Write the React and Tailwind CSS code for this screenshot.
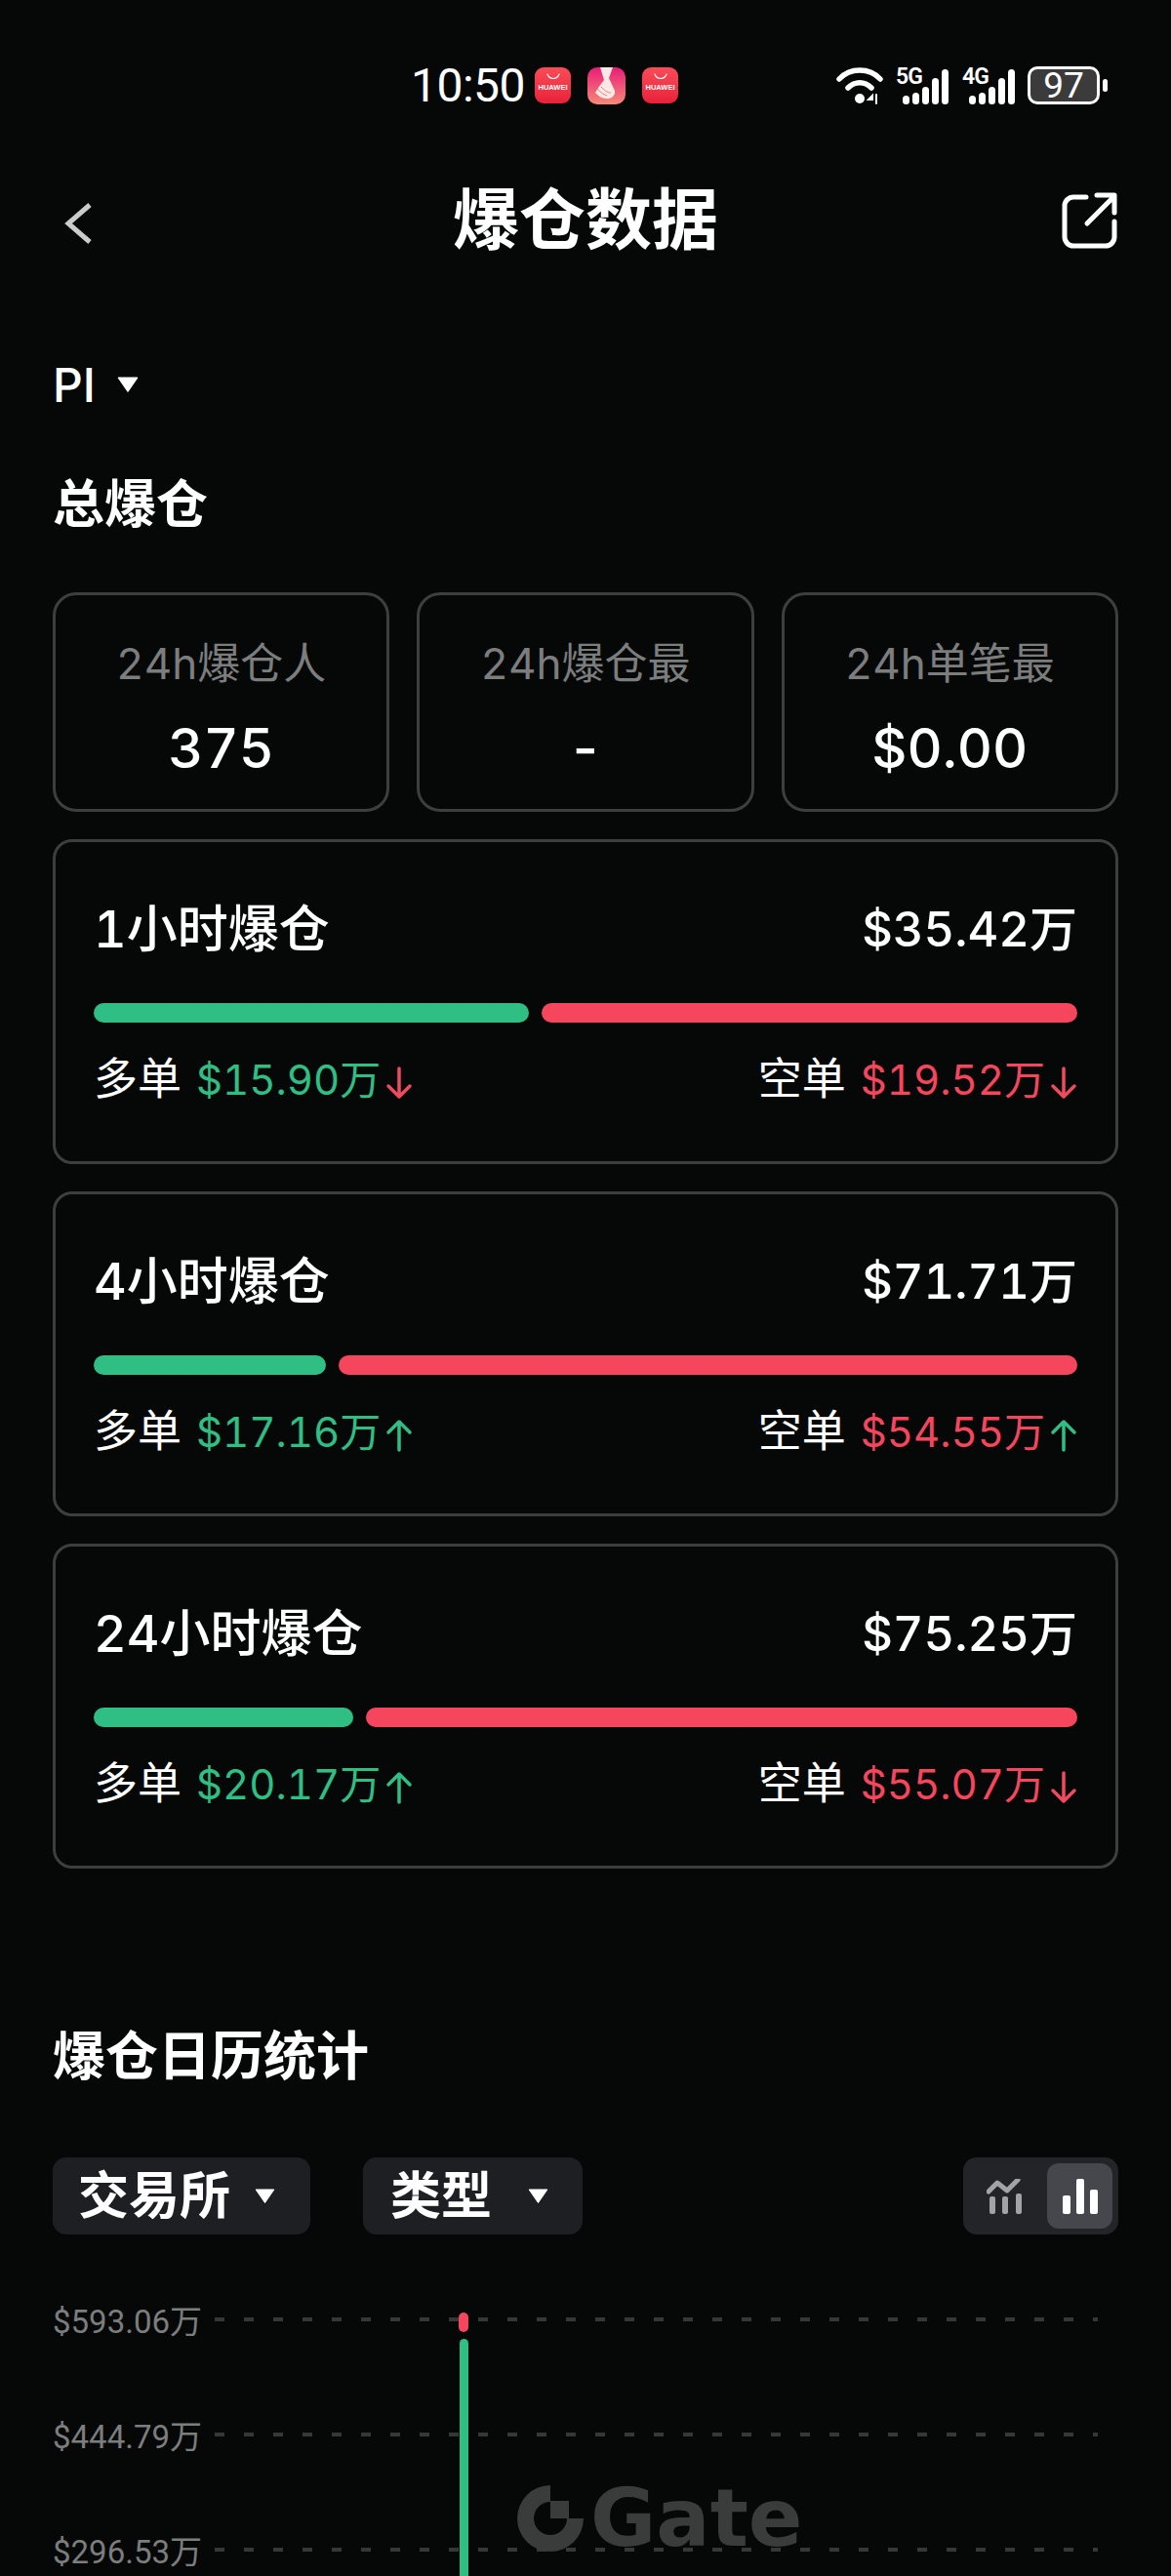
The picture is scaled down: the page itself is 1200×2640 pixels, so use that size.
const CJK = "font-['Inter','Noto_Sans_CJK_SC',sans-serif]";

const cards = [
  { title: '1小时爆仓', total: '$35.42万', split: 446, long: '$15.90万', longDir: 'down', short: '$19.52万', shortDir: 'down' },
  { title: '4小时爆仓', total: '$71.71万', split: 238, long: '$17.16万', longDir: 'up', short: '$54.55万', shortDir: 'up' },
  { title: '24小时爆仓', total: '$75.25万', split: 266, long: '$20.17万', longDir: 'up', short: '$55.07万', shortDir: 'down' },
];

const stats = [
  { label: '24h爆仓人', value: '375' },
  { label: '24h爆仓最', value: '-' },
  { label: '24h单笔最', value: '$0.00' },
];

const axis = ['$593.06万', '$444.79万', '$296.53万'];

function Caret({ className }) {
  return (
    <svg className={className} viewBox="0 0 22 16">
      <path d="M1 1h20L11 15.5z" fill="#fff" stroke="#fff" strokeLinejoin="round" />
    </svg>
  );
}

function Arrow({ dir }) {
  const color = dir === 'up' ? '#2fbf85' : '#f04a5f';
  return (
    <svg className="w-[28px] h-[34px] ml-[5px] mt-[8px]" viewBox="0 0 28 34" fill="none" stroke={color} strokeWidth="3.5" strokeLinecap="round" strokeLinejoin="round">
      {dir === 'up'
        ? <path d="M14 32V3M3 14 14 3l11 11" />
        : <path d="M14 2v29M3 20l11 11 11-11" />}
    </svg>
  );
}

function HuaweiIcon() {
  return (
    <div className="w-[37px] h-[37px] rounded-[9px] bg-gradient-to-b from-[#fa4a58] to-[#e8203a] flex flex-col items-center">
      <svg className="w-[14px] h-[7px] mt-[6px]" viewBox="0 0 14 7" fill="none" stroke="#fff" strokeWidth="1.2" strokeLinecap="round">
        <path d="M1 1c1 3 3 4.500 6 4.500S12 4 13 1" />
      </svg>
      <span className="font-['Liberation_Sans',sans-serif] text-[7.5px] leading-[8px] mt-[4px] font-bold text-white">HUAWEI</span>
    </div>
  );
}

function HandsIcon() {
  return (
    <svg className="w-[39px] h-[38px] mx-[17px]" viewBox="0 0 39 38">
      <defs>
        <linearGradient id="hands" x1="0" y1="0" x2="0" y2="1">
          <stop offset="0" stopColor="#ea1c78" />
          <stop offset="1" stopColor="#f58a78" />
        </linearGradient>
      </defs>
      <rect width="39" height="38" rx="10" fill="url(#hands)" />
      <path d="M13 0h13l-4 11 6 13c1 5-4 9-9 8-5 0-9-4-11-6l3-5 6-8z" fill="#fde8e6" />
      <path d="M10 22c3 3 6 6 10 7M14 20c3 3 6 6 10 6" stroke="#d98a80" strokeWidth="1" fill="none" />
    </svg>
  );
}

function SignalBars({ label }) {
  const bars = [9, 12, 18, 27, 36];
  return (
    <div className="relative w-[47px] h-[37px] mt-[2px] flex items-end justify-end gap-[3px]">
      <span className="absolute left-[-7px] top-[-2px] text-[23px] leading-[22px] font-semibold text-white font-['Roboto',sans-serif] tracking-[-1px]">{label}</span>
      {bars.map((h, i) => (
        <span key={i} className="w-[7px] rounded-full bg-white" style={{ height: h }} />
      ))}
    </div>
  );
}

function StatusBar() {
  return (
    <div className="h-[128px] pt-[68px] pl-[421px] pr-[65px] flex items-start justify-between">
      <div className="flex items-center h-[39px]">
        <span className="font-['Roboto',sans-serif] text-[48px] leading-[39px] font-normal text-white mr-[10px] tracking-[-0.5px]">10:50</span>
        <HuaweiIcon />
        <HandsIcon />
        <HuaweiIcon />
      </div>
      <div className="flex items-center h-[39px]">
        <svg className="w-[48px] h-[39px] mr-[20px]" viewBox="0 0 48 39" fill="none" stroke="#fff" strokeWidth="5.500" strokeLinecap="round">
          <path d="M3 13C14 1 34 1 45 13M12 22c7-7 17-7 24 0" />
          <circle cx="24" cy="33" r="5" fill="#fff" stroke="none" />
          <path d="M37 30l-4 4h4zM41 29v9" strokeWidth="2" />
        </svg>
        <SignalBars label="5G" />
        <span className="w-[21px]" />
        <SignalBars label="4G" />
        <div className="ml-[13px] w-[74px] h-[39px] rounded-[10px] border-[3px] border-white bg-[#3b3b3b] flex items-center justify-center">
          <span className="font-['Roboto',sans-serif] text-[37px] leading-none text-white">97</span>
        </div>
        <span className="ml-[3px] w-[5px] h-[13px] rounded-full bg-white" />
      </div>
    </div>
  );
}

function SplitCard({ card }) {
  return (
    <div className="rounded-[20px] border-[3px] border-[#3d3e3e] pt-[60px] pb-[54px] px-[39px] tabular-nums">
      <div className="flex items-center justify-between h-[60px] font-medium text-white">
        <span className="text-[52px]">{card.title}</span>
        <span className="text-[49px]">{card.total}</span>
      </div>
      <div className="flex gap-[13px] mt-[45px]">
        <div className="h-[20px] rounded-full bg-[#2fbf85]" style={{ width: card.split }} />
        <div className="h-[20px] rounded-full bg-[#f6465d] flex-1" />
      </div>
      <div className="flex items-center justify-between h-[60px] mt-[28px] text-[42px]">
        <div className="flex items-center">
          <span className="text-white text-[45px]">多单</span>
          <span className="text-[#2fbf85] ml-[15px]">{card.long}</span>
          <Arrow dir={card.longDir} />
        </div>
        <div className="flex items-center">
          <span className="text-white text-[45px]">空单</span>
          <span className="text-[#f6465d] ml-[15px]">{card.short}</span>
          <Arrow dir={card.shortDir} />
        </div>
      </div>
    </div>
  );
}

function ChartModeToggle() {
  return (
    <div className="w-[159px] h-[79px] rounded-[14px] bg-[#232427] flex items-center justify-end pr-[6px]">
      <div className="w-[86px] h-[67px] flex items-center justify-center">
        <svg className="w-[38px] h-[36px]" viewBox="0 0 38 36" fill="#a2a3a5">
          <path d="M2 13 11 4l10 8L32 1" fill="none" stroke="#a2a3a5" strokeWidth="5" strokeLinecap="round" strokeLinejoin="round" />
          <rect x="3" y="18" width="6" height="18" rx="2" />
          <rect x="16" y="18" width="6" height="18" rx="2" />
          <rect x="30" y="15" width="6" height="21" rx="2" />
        </svg>
      </div>
      <div className="w-[67px] h-[67px] rounded-[12px] bg-[#46474d] flex items-center justify-center">
        <svg className="w-[36px] h-[36px]" viewBox="0 0 36 36" fill="#fff">
          <rect x="0" y="17" width="8" height="19" rx="2" />
          <rect x="14" y="0" width="8" height="36" rx="2" />
          <rect x="28" y="11" width="8" height="25" rx="2" />
        </svg>
      </div>
    </div>
  );
}

function Chart() {
  return (
    <div className="relative mt-[28px]">
      {axis.map((label) => (
        <div key={label} className="flex items-center h-[118px]">
          <span className="w-[166px] font-['Roboto','Noto_Sans_CJK_SC',sans-serif] text-[33px] text-[#7c7d7d] mt-[6px]">{label}</span>
          <div className="w-[905px] h-[4px] bg-[repeating-linear-gradient(90deg,#363737_0,#363737_10px,transparent_10px,transparent_30px)]" />
        </div>
      ))}
      {/* bars and watermark lie over the grid */}
      <div className="absolute left-[416px] top-[52px] w-[10px] h-[20px] rounded-full bg-[#f6465d]" />
      <div className="absolute left-[417px] top-[79px] bottom-0 w-[9px] rounded-t-full bg-[#2fbf85]" />
      <div className="absolute left-[476px] top-[229px] flex items-center gap-[7px]">
        <svg className="w-[68px] h-[68px]" viewBox="0 0 68 68" fill="#3a3b3b">
          <path d="M34 0v17a17 17 0 1 0 17 17h17A34 34 0 1 1 34 0z" />
          <rect x="34" y="16" width="19" height="18" />
        </svg>
        <span className="font-['DejaVu_Sans',sans-serif] text-[82px] leading-[68px] font-bold text-[#3a3b3b]">Gate</span>
      </div>
    </div>
  );
}

export default function App() {
  return (
    <div className={`${CJK} w-[1200px] h-[2640px] overflow-hidden bg-[#060808] text-white`}>
      <StatusBar />

      <div className="h-[190px] px-[54px] flex items-center justify-between">
        <div className="w-[58px] pl-[11px] pt-[12px]">
          <svg className="w-[30px] h-[42px]" viewBox="0 0 30 42" fill="none" stroke="#c9cccb" strokeWidth="5">
            <path d="M27 2 5 21l22 19" />
          </svg>
        </div>
        <h1 className="text-[68px] font-bold pt-[3px]">爆仓数据</h1>
        <svg className="w-[58px] h-[58px] mt-[5px]" viewBox="0 0 58 58" fill="none" stroke="#fff" strokeWidth="5" strokeLinecap="round" strokeLinejoin="round">
          <path d="M25 5H12a9 9 0 0 0-9 9v32a9 9 0 0 0 9 9h33a9 9 0 0 0 9-9V30" />
          <path d="M26 32 54 4M36 3h18v18" />
        </svg>
      </div>

      <div className="px-[54px]">
        <div className="flex items-center h-[60px] mt-[47px]">
          <span className="text-[48px] font-medium">PI</span>
          <Caret className="w-[22px] h-[16px] ml-[22px] mb-[2px]" />
        </div>

        <h2 className="h-[64px] mt-[60px] text-[53px] leading-[64px] font-semibold">总爆仓</h2>

        <div className="grid grid-cols-3 gap-[28px] mt-[58px]">
          {stats.map((s) => (
            <div key={s.label} className="rounded-[24px] border-[3px] border-[#3d3e3e] pt-[40px] pb-[30px] flex flex-col items-center tabular-nums">
              <span className="h-[60px] text-[44px] leading-[60px] text-[#7c7d7d]">{s.label}</span>
              <span className="h-[64px] mt-[25px] text-[56px] leading-[64px] font-medium">{s.value}</span>
            </div>
          ))}
        </div>

        <div className="flex flex-col gap-[28px] mt-[28px]">
          {cards.map((c) => <SplitCard key={c.title} card={c} />)}
        </div>

        <h2 className="h-[64px] mt-[161px] text-[54px] leading-[64px] font-semibold">爆仓日历统计</h2>

        <div className="flex items-center justify-between mt-[71px]">
          <div className="flex gap-[54px]">
            <div className="w-[264px] h-[79px] rounded-[14px] bg-[#1e1f23] pl-[26px] flex items-center">
              <span className="text-[52px] font-semibold">交易所</span>
              <Caret className="w-[21px] h-[15px] ml-[25px]" />
            </div>
            <div className="w-[225px] h-[79px] rounded-[14px] bg-[#1e1f23] pl-[28px] flex items-center">
              <span className="text-[52px] font-semibold">类型</span>
              <Caret className="w-[21px] h-[15px] ml-[37px]" />
            </div>
          </div>
          <ChartModeToggle />
        </div>

        <Chart />
      </div>
    </div>
  );
}
